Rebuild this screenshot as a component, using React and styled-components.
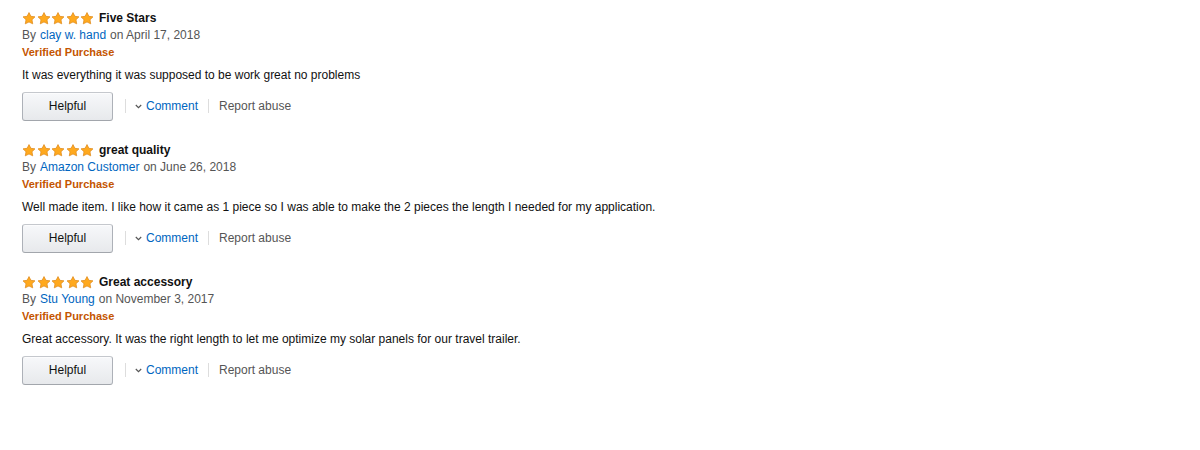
import React from 'react';
import styled, { createGlobalStyle } from 'styled-components';

const GlobalStyle = createGlobalStyle`
  html, body {
    margin: 0;
    padding: 0;
    background: #fff;
  }
  body {
    font-family: "Liberation Sans", Arial, sans-serif;
    color: #111;
  }
`;

const List = styled.div`
  display: flex;
  flex-direction: column;
  gap: 21.5px;
  padding: 10px 22px;
`;

const Review = styled.div`
  display: flex;
  flex-direction: column;
`;

const Line = styled.div`
  display: flex;
  align-items: center;
  height: 17px;
  font-size: 12px;
  line-height: 17px;
  white-space: nowrap;
`;

const Stars = styled.span`
  display: inline-flex;
  gap: 0.5px;
  margin-right: 5px;
`;

const Title = styled.span`
  font-weight: bold;
  font-size: 12px;
  color: #111;
`;

const Byline = styled(Line)`
  color: #555;
`;

const Author = styled.a`
  color: #0066c0;
  text-decoration: none;
  margin: 0 4px;
`;

const Verified = styled(Line)`
  color: #c45500;
  font-weight: bold;
  font-size: 11px;
`;

const Body = styled(Line)`
  margin-top: 5.5px;
  color: #111;
`;

const Actions = styled.div`
  display: flex;
  align-items: center;
  margin-top: 8px;
  font-size: 12px;
`;

const HelpfulButton = styled.button`
  width: 91px;
  height: 29px;
  border: 1px solid #adb1b8;
  border-top-color: #c5c8cd;
  border-bottom-color: #a2a6ac;
  border-radius: 3px;
  background: linear-gradient(to bottom, #f7f8fa, #e7e9ec);
  box-shadow: 0 1px 0 rgba(255, 255, 255, 0.6) inset;
  font-family: inherit;
  font-size: 12px;
  color: #111;
  cursor: pointer;
`;

const Divider = styled.span`
  width: 1px;
  height: 14px;
  background: #ddd;
  margin: 0 ${(p) => p.$left || 10}px 0 ${(p) => p.$right || 10}px;
`;

const CommentLink = styled.a`
  display: inline-flex;
  align-items: center;
  gap: 4px;
  color: #0066c0;
  text-decoration: none;
`;

const Abuse = styled.a`
  color: #555;
  text-decoration: none;
`;

const Star = () => (
  <svg width="14" height="13" viewBox="0 0 24 23">
    <path
      d="M12 1l3.3 6.6 7.3 1-5.3 5.1 1.3 7.3L12 17.6l-6.6 3.4 1.3-7.3-5.3-5.1 7.3-1z"
      fill="#ffa91e"
      stroke="#de8a1c"
      strokeWidth="1.3"
      strokeLinejoin="round"
    />
  </svg>
);

const Chevron = () => (
  <svg width="7" height="5" viewBox="0 0 7 5">
    <path d="M0.8 1l2.7 2.6L6.2 1" fill="none" stroke="#555" strokeWidth="1.2" />
  </svg>
);

const reviews = [
  {
    title: 'Five Stars',
    author: 'clay w. hand',
    date: 'April 17, 2018',
    text: 'It was everything it was supposed to be work great no problems',
  },
  {
    title: 'great quality',
    author: 'Amazon Customer',
    date: 'June 26, 2018',
    text: 'Well made item. I like how it came as 1 piece so I was able to make the 2 pieces the length I needed for my application.',
  },
  {
    title: 'Great accessory',
    author: 'Stu Young',
    date: 'November 3, 2017',
    text: 'Great accessory. It was the right length to let me optimize my solar panels for our travel trailer.',
  },
];

export default function App() {
  return (
    <>
      <GlobalStyle />
      <List>
        {reviews.map((r) => (
          <Review key={r.title}>
            <Line>
              <Stars>
                {[0, 1, 2, 3, 4].map((i) => (
                  <Star key={i} />
                ))}
              </Stars>
              <Title>{r.title}</Title>
            </Line>
            <Byline>
              By<Author href="#">{r.author}</Author>on {r.date}
            </Byline>
            <Verified>Verified Purchase</Verified>
            <Body>{r.text}</Body>
            <Actions>
              <HelpfulButton>Helpful</HelpfulButton>
              <Divider $right={12} $left={9} />
              <CommentLink href="#">
                <Chevron />
                Comment
              </CommentLink>
              <Divider />
              <Abuse href="#">Report abuse</Abuse>
            </Actions>
          </Review>
        ))}
      </List>
    </>
  );
}
